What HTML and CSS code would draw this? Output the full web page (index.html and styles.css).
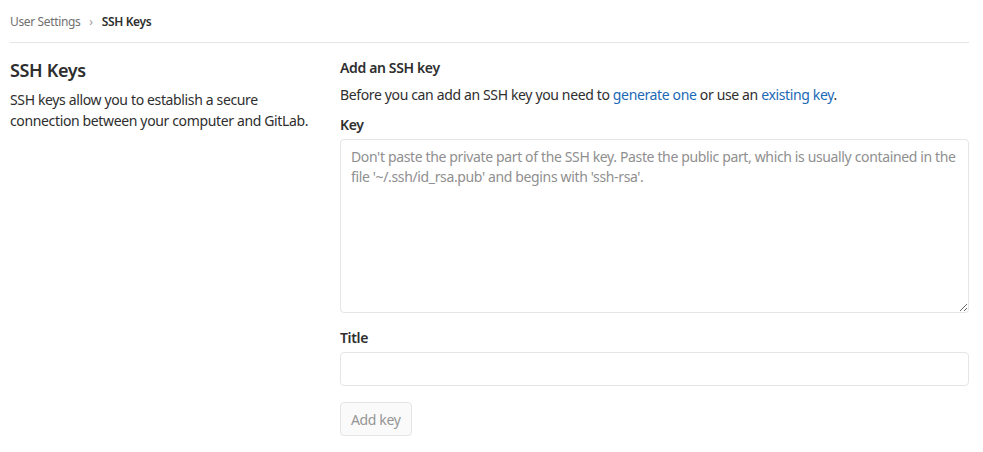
FILE: index.html
```html
<!DOCTYPE html>
<html lang="en">
<head>
    <meta charset="UTF-8">
    <title>SSH Keys · User Settings</title>
    <link rel="stylesheet" href="styles.css">
</head>
<body>
    <div class="page">
        <nav class="breadcrumbs">
            <a href="#" class="crumb">User Settings</a>
            <span class="sep">&#8250;</span>
            <span class="crumb current">SSH Keys</span>
        </nav>

        <div class="settings-row">
            <div class="settings-side">
                <h4>SSH Keys</h4>
                <p>SSH keys allow you to establish a secure connection between your computer and GitLab.</p>
            </div>
            <div class="settings-main">
                <h5>Add an SSH key</h5>
                <p class="intro">Before you can add an SSH key you need to <a href="#">generate one</a> or use an <a href="#">existing key</a>.</p>
                <form>
                    <div class="form-group">
                        <label for="key">Key</label>
                        <textarea id="key" placeholder="Don't paste the private part of the SSH key. Paste the public part, which is usually contained in the file '~/.ssh/id_rsa.pub' and begins with 'ssh-rsa'."></textarea>
                    </div>
                    <div class="form-group">
                        <label for="title">Title</label>
                        <input type="text" id="title">
                    </div>
                    <button type="button" class="btn" disabled>Add key</button>
                </form>
            </div>
        </div>
    </div>
</body>
</html>
```

FILE: styles.css
```css
* { margin: 0; padding: 0; box-sizing: border-box; }
body {
    font-family: "Noto Sans", "Open Sans", Arial, sans-serif;
    font-size: 14px; color: #2e2e2e; background: #fff;
    letter-spacing: -0.36px;
}
.page { padding: 0 14px 0 10px; }
.breadcrumbs {
    display: flex; align-items: center; gap: 9px;
    height: 43px; font-size: 12px; border-bottom: 1px solid #e5e5e5;
}
.crumb { color: #707070; text-decoration: none; }
.crumb.current { color: #2e2e2e; font-weight: 600; }
.sep { color: #999; font-size: 12px; }

.settings-row { display: flex; padding-top: 15px; }
.settings-side { width: 330px; flex-shrink: 0; padding-right: 20px; }
.settings-side h4 { font-size: 18px; font-weight: 600; line-height: 24px; margin-bottom: 7px; }
.settings-side p { line-height: 21px; }

.settings-main { flex: 1; }
.settings-main h5 { font-size: 14px; font-weight: 600; line-height: 20px; margin-bottom: 7px; }
.intro { line-height: 20px; margin-bottom: 10px; }
.intro a { color: #1b69b6; text-decoration: none; }

.form-group { margin-bottom: 11px; }
.form-group label { display: block; font-weight: 600; line-height: 20px; margin-bottom: 4px; }
.form-group textarea, .form-group input {
    width: 100%; border: 1px solid #e5e5e5; border-radius: 4px;
    font-family: inherit; font-size: 14px; color: #2e2e2e; letter-spacing: inherit;
}
.form-group textarea {
    height: 174px; padding: 7px 10px; line-height: 20px; resize: vertical;
}
.form-group textarea::placeholder { color: #8f8f8f; }
.form-group input { height: 34px; padding: 6px 10px; }
.form-group + .form-group { margin-top: 1px; margin-bottom: 16px; }
.btn {
    height: 34px; padding: 0 10px; font-family: inherit; font-size: 14px; letter-spacing: inherit;
    background: #fafafa; color: #959595; border: 1px solid #e5e5e5; border-radius: 4px;
}
```
